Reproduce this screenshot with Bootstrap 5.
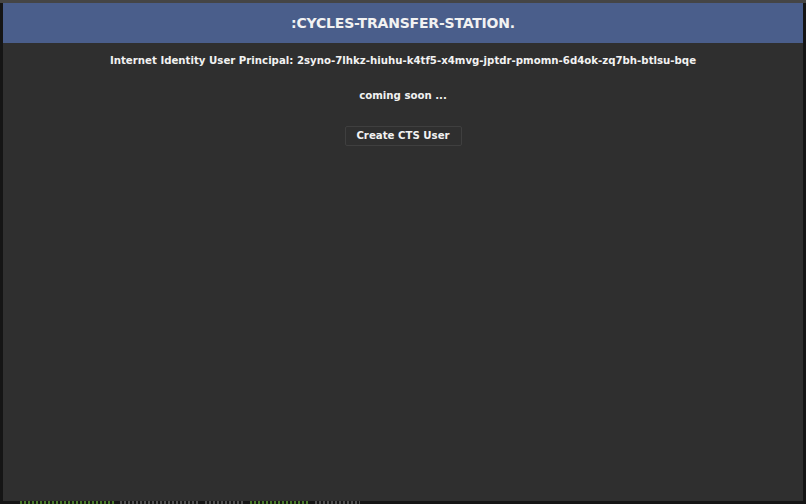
<!doctype html>
<html lang="en">
<head>
<meta charset="utf-8">
<title>CTS</title>
<link rel="stylesheet" href="https://cdn.jsdelivr.net/npm/bootstrap@5.3.0/dist/css/bootstrap.min.css">
<style>
html,body{height:100%;margin:0}
body{background:#151515;overflow:hidden;font-family:"DejaVu Sans",sans-serif}
.desk{height:504px;width:806px;padding-top:3px}
.topstrip{height:3px;width:806px;background:#454545}
.app-win{width:800px;height:498px;margin:0 3px;background:#2f2f2f;color:#f2f2f2}
.app-head{height:40px;background:#4a5e8b;font-size:14px;font-weight:700;letter-spacing:-.2px}
.app-line{font-size:10.2px;font-weight:700;line-height:14px;white-space:nowrap}
.first-line{margin-top:11px}
.second-line{margin-top:21px}
.cta{margin-top:23px;width:117px;height:20px;padding:0;font-size:10.2px;font-weight:700;line-height:18px;color:#f2f2f2;background:#2f2f2f;border:1px solid #3f3f3f;border-radius:2px}
.term{height:3px;padding-left:20px;gap:5px}
.term-g,.term-n{display:block;height:3px;background-image:repeating-linear-gradient(90deg,currentColor 0 2px,transparent 2px 4px)}
.term-g{color:#4a7a2a}
.term-n{color:#505050}
.w-a{width:95px}.w-b{width:80px}.w-c{width:40px}.w-d{width:60px}.w-e{width:45px}
</style>
</head>
<body>
<div class="desk position-relative d-flex flex-column">
<div class="topstrip position-absolute top-0 start-0"></div>
<main class="app-win d-flex flex-column align-items-center">
<header class="app-head w-100 d-flex align-items-center justify-content-center">:CYCLES-TRANSFER-STATION.</header>
<p class="app-line first-line mb-0">Internet Identity User Principal: 2syno-7lhkz-hiuhu-k4tf5-x4mvg-jptdr-pmomn-6d4ok-zq7bh-btlsu-bqe</p>
<p class="app-line second-line mb-0">coming soon ...</p>
<button type="button" class="btn cta">Create CTS User</button>
</main>
<div class="term d-flex" aria-hidden="true"><span class="term-g w-a"></span><span class="term-n w-b"></span><span class="term-n w-c"></span><span class="term-g w-d"></span><span class="term-n w-e"></span></div>
</div>
</body>
</html>
